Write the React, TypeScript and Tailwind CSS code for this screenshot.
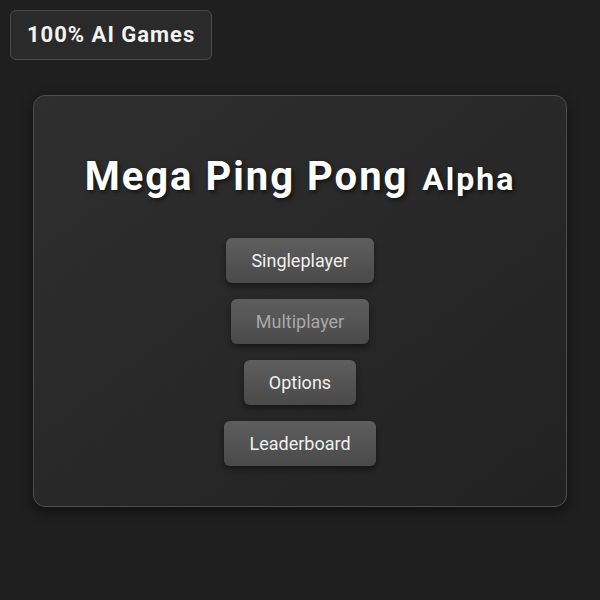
import React from "react";

const buttons = [
  { label: "Singleplayer", disabled: false },
  { label: "Multiplayer", disabled: true },
  { label: "Options", disabled: false },
  { label: "Leaderboard", disabled: false },
];

export default function App() {
  return (
    <div
      className="min-h-[600px] w-[600px] bg-[#1f1f1f] flex flex-col"
      style={{ fontFamily: "Roboto, 'Noto Sans', sans-serif" }}
    >
      <div className="pl-[10px] pt-[10px]">
        <div className="inline-block rounded-[6px] border border-[#4a4a4a] bg-[#2a2a2a] px-[16px] py-[11px] text-[22px] leading-[26px] font-bold tracking-[1px] text-[#f2f2f2]">
          100% AI Games
        </div>
      </div>
      <div className="mx-[33px] mt-[35px] rounded-[12px] border border-[#4e4e4e] bg-gradient-to-br from-[#2f2f2f] to-[#222222] shadow-[0_4px_12px_rgba(0,0,0,0.5)] px-10 pt-10 pb-[40px] flex flex-col items-center">
        <h1 className="mt-[17px] h-[48px] leading-[48px] text-[40px] font-bold tracking-[2px] text-white whitespace-nowrap [text-shadow:2px_2px_4px_rgba(0,0,0,0.6)]">
          Mega Ping Pong<span className="ml-[4px] text-[32px]"> Alpha</span>
        </h1>
        <div className="mt-[37px] flex flex-col items-center gap-[16px]">
          {buttons.map((b) => (
            <button
              key={b.label}
              className={`rounded-[6px] bg-gradient-to-b from-[#5e5e5e] to-[#4a4a4a] px-[25px] py-[12px] text-[18px] leading-[21px] shadow-[0_3px_6px_rgba(0,0,0,0.45)] ${
                b.disabled ? "text-[#a8a8a8]" : "text-[#f0f0f0]"
              }`}
            >
              {b.label}
            </button>
          ))}
        </div>
      </div>
    </div>
  );
}
